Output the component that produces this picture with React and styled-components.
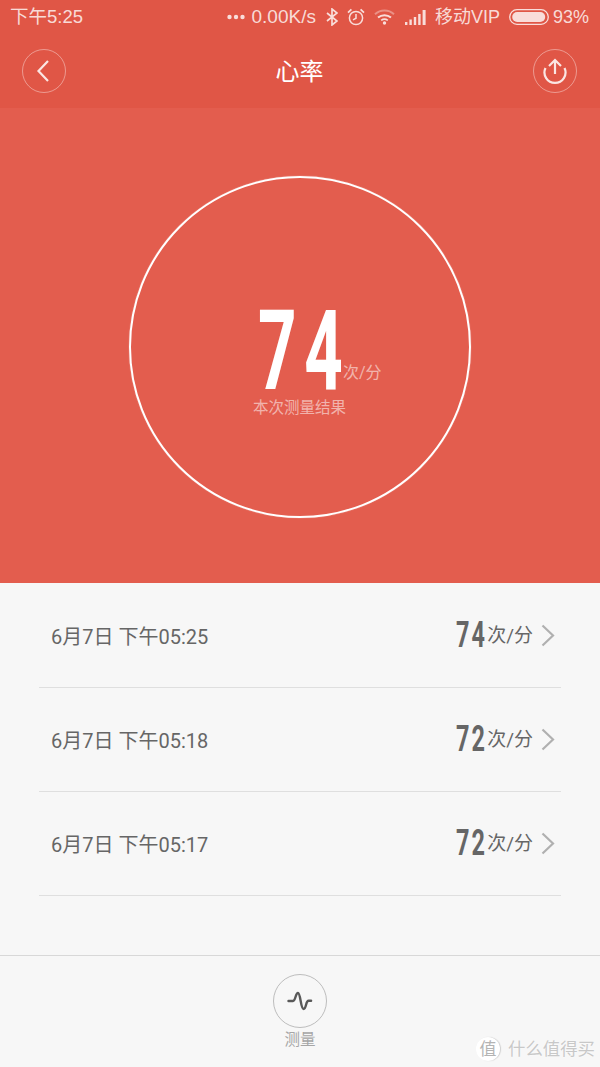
import React from 'react'
import styled, { createGlobalStyle } from 'styled-components'

const GlobalStyle = createGlobalStyle`
    html, body {
        margin: 0;
        padding: 0;
        background: #f7f7f7;
    }
    * {
        box-sizing: border-box;
    }
`

const CJK = '"Noto Sans CJK SC", sans-serif'

const Page = styled.div`
    position: relative;
    width: 600px;
    height: 1067px;
    overflow: hidden;
    display: flex;
    flex-direction: column;
    font-family: Roboto, ${CJK};
    background: #f7f7f7;
`

const Top = styled.div`
    height: 108px;
    background: #e05646;
    display: flex;
    flex-direction: column;
`

const StatusBar = styled.div`
    height: 36px;
    padding: 0 11px 2px 10px;
    display: flex;
    align-items: center;
    justify-content: space-between;
    color: rgba(255, 255, 255, 0.8);
    font-family: "Liberation Sans", ${CJK};
    font-size: 18px;
    line-height: 22px;
    white-space: nowrap;
`

const StatusTime = styled.span`
    font-size: 18.5px;
`

const StatusRight = styled.div`
    display: flex;
    align-items: center;
`

const StatusItem = styled.span`
    display: flex;
    align-items: center;
    margin-left: ${({ $gap }) => $gap}px;
    font-size: ${({ $size }) => $size || 18}px;
`

const NavBar = styled.div`
    flex: 1;
    padding: 0 23px 2px 22px;
    display: flex;
    align-items: center;
    justify-content: space-between;
`

const RoundButton = styled.div`
    width: 44px;
    height: 44px;
    border-radius: 50%;
    border: 1px solid rgba(255, 255, 255, 0.4);
    display: flex;
    align-items: center;
    justify-content: center;
`

const Title = styled.div`
    color: #fff;
    font-size: 24px;
    line-height: 30px;
    margin-top: 2px;
`

const Hero = styled.div`
    height: 475px;
    background: #e35d4e;
    padding-top: 68px;
    display: flex;
    justify-content: center;
`

const Ring = styled.div`
    width: 342px;
    height: 342px;
    border-radius: 50%;
    border: 2px solid #fff;
    box-shadow: 0 0 1px rgba(255, 255, 255, 0.8);
    padding: 127px 0 0 122px;
    display: flex;
    flex-direction: column;
    align-items: flex-start;
`

const ValueRow = styled.div`
    display: flex;
    align-items: flex-end;
    height: 91px;
`

const BigNumber = styled.div`
    width: 90px;
    height: 91px;
    margin-left: 5px;
    font-family: Roboto, sans-serif;
    font-weight: 700;
    font-size: 112px;
    line-height: 91px;
    letter-spacing: 13px;
    color: #fff;
    transform: scaleX(0.6);
    transform-origin: left center;
    white-space: nowrap;
`

const BigUnit = styled.span`
    color: rgba(255, 255, 255, 0.55);
    font-size: 16px;
    line-height: 20px;
    margin-bottom: 13px;
    margin-left: -5px;
`

const Caption = styled.div`
    color: rgba(255, 255, 255, 0.55);
    font-size: 15.5px;
    line-height: 22px;
    margin-top: 1px;
`

const List = styled.div`
    flex: 1;
    padding: 1px 39px 0;
`

const Row = styled.div`
    height: 104px;
    border-bottom: 1px solid #dfdfdf;
    padding: 0 6px 1px 12px;
    display: flex;
    align-items: center;
    justify-content: space-between;
    color: #666;
`

const RowDate = styled.span`
    font-size: 20px;
    white-space: nowrap;
`

const RowValue = styled.div`
    display: flex;
    align-items: center;
`

const RowNumber = styled.span`
    display: block;
    width: 31px;
    font-family: Roboto, sans-serif;
    font-weight: 700;
    font-size: 36px;
    line-height: 40px;
    letter-spacing: 3px;
    transform: scaleX(0.65);
    transform-origin: left center;
    white-space: nowrap;
`

const RowUnit = styled.span`
    font-size: 19px;
    line-height: 24px;
    white-space: nowrap;
    margin: 2px 8px 0 0;
`

const TabBar = styled.div`
    height: 112px;
    border-top: 1px solid #d8d8d8;
    padding-top: 18px;
    display: flex;
    flex-direction: column;
    align-items: center;
`

const MeasureButton = styled.div`
    width: 54px;
    height: 54px;
    border-radius: 50%;
    border: 1px solid #bdbdbd;
    display: flex;
    align-items: center;
    justify-content: center;
`

const TabLabel = styled.div`
    color: #a6a6a6;
    font-size: 15.5px;
    line-height: 20px;
    margin-top: 2px;
`

const Watermark = styled.div`
    position: absolute;
    right: 5px;
    bottom: 6px;
    display: flex;
    align-items: center;
    gap: 8px;
    color: #c8c8c8;
    font-size: 17.4px;
    line-height: 24px;
    text-shadow: 0 0 2px #fff;
`

const WatermarkBadge = styled.span`
    width: 24px;
    height: 24px;
    border-radius: 50%;
    background: #fff;
    box-shadow: 1px 0 1px #cfcfcf;
    display: flex;
    align-items: center;
    justify-content: center;
    font-size: 17px;
    color: #b4b4b4;
`

const rows = [
    { date: '6月7日 下午05:25', value: 74 },
    { date: '6月7日 下午05:18', value: 72 },
    { date: '6月7日 下午05:17', value: 72 },
]

const Dots = () => (
    <svg width="18" height="6" viewBox="0 0 18 6" fill="rgba(255,255,255,0.8)">
        <circle cx="2.5" cy="3" r="2.2" />
        <circle cx="9" cy="3" r="2.2" />
        <circle cx="15.5" cy="3" r="2.2" />
    </svg>
)

const Bluetooth = () => (
    <svg width="12" height="18" viewBox="0 0 12 18" fill="none" stroke="rgba(255,255,255,0.8)" strokeWidth="1.7">
        <path d="M1 5l10 8-5 4V1l5 4-10 8" />
    </svg>
)

const Alarm = () => (
    <svg width="18" height="18" viewBox="0 0 18 18" fill="none" stroke="rgba(255,255,255,0.8)" strokeWidth="1.5">
        <circle cx="9" cy="10" r="6.6" />
        <path d="M9 6v4.2l-3 1.6" />
        <path d="M1 4.6L4.4 1.4M17 4.6L13.6 1.4" strokeWidth="1.8" />
    </svg>
)

const Wifi = () => (
    <svg width="21" height="16" viewBox="0 0 21 16" fill="none">
        <path d="M1 5.2C6.4.4 14.6.4 20 5.2" stroke="rgba(255,255,255,0.35)" strokeWidth="2" />
        <path d="M4 8.6c3.8-3.2 9.2-3.2 13 0" stroke="rgba(255,255,255,0.8)" strokeWidth="2" />
        <path d="M7.2 11.4c2-1.5 4.6-1.5 6.6 0" stroke="rgba(255,255,255,0.8)" strokeWidth="1.8" />
        <circle cx="10.5" cy="14" r="1.7" fill="rgba(255,255,255,0.8)" />
    </svg>
)

const Signal = () => (
    <svg width="21" height="15" viewBox="0 0 21 15" fill="rgba(255,255,255,0.8)">
        <rect x="0" y="12" width="2.4" height="3" />
        <rect x="4.4" y="9.5" width="2.4" height="5.5" />
        <rect x="8.8" y="7" width="2.4" height="8" />
        <rect x="13.2" y="4" width="2.4" height="11" />
        <rect x="17.6" y="0" width="3" height="15" />
    </svg>
)

const Battery = () => (
    <svg width="40" height="16" viewBox="0 0 40 16">
        <rect x="0.7" y="0.7" width="38.6" height="14.6" rx="7.3" fill="none" stroke="rgba(255,255,255,0.8)" strokeWidth="1.3" />
        <rect x="3.2" y="3" width="33" height="10" rx="5" fill="rgba(255,255,255,0.8)" />
    </svg>
)

const BackIcon = () => (
    <svg width="16" height="22" viewBox="0 0 16 22" fill="none" stroke="rgba(255,255,255,0.85)" strokeWidth="2.2">
        <path d="M12 1L2.5 11 12 21" />
    </svg>
)

const ShareIcon = () => (
    <svg width="26" height="28" viewBox="0 0 26 28" fill="none" stroke="rgba(255,255,255,0.85)" strokeWidth="2.2">
        <path d="M13 17V3M7 9l6-6 6 6" />
        <path d="M3.5 11a10.5 10.5 0 1 0 19 0" />
    </svg>
)

const Chevron = () => (
    <svg width="14" height="23" viewBox="0 0 14 23" fill="none" stroke="#b0b0b0" strokeWidth="2.2">
        <path d="M1.5 1.5L12 11.5 1.5 21.5" />
    </svg>
)

const WaveIcon = () => (
    <svg width="26" height="20" viewBox="0 0 26 20" fill="none" stroke="#595959" strokeWidth="2.4" strokeLinecap="round">
        <path d="M1.5 10H6c2.6 0 2.4-8 5-8s2.6 16 5.6 16c2.8 0 2-8.2 5-8.2h2.5" />
    </svg>
)

const App = () => {
    return (
        <>
            <GlobalStyle />
            <Page>
                <Top>
                    <StatusBar>
                        <StatusTime>下午5:25</StatusTime>
                        <StatusRight>
                            <Dots />
                            <StatusItem $gap={7} $size={19}>0.00K/s</StatusItem>
                            <StatusItem $gap={10}><Bluetooth /></StatusItem>
                            <StatusItem $gap={9}><Alarm /></StatusItem>
                            <StatusItem $gap={9}><Wifi /></StatusItem>
                            <StatusItem $gap={10}><Signal /></StatusItem>
                            <StatusItem $gap={9}>移动VIP</StatusItem>
                            <StatusItem $gap={9}><Battery /></StatusItem>
                            <StatusItem $gap={4}>93%</StatusItem>
                        </StatusRight>
                    </StatusBar>
                    <NavBar>
                        <RoundButton><BackIcon /></RoundButton>
                        <Title>心率</Title>
                        <RoundButton><ShareIcon /></RoundButton>
                    </NavBar>
                </Top>
                <Hero>
                    <Ring>
                        <ValueRow>
                            <BigNumber>74</BigNumber>
                            <BigUnit>次/分</BigUnit>
                        </ValueRow>
                        <Caption>本次测量结果</Caption>
                    </Ring>
                </Hero>
                <List>
                    {rows.map((row) => (
                        <Row key={row.date}>
                            <RowDate>{row.date}</RowDate>
                            <RowValue>
                                <RowNumber>{row.value}</RowNumber>
                                <RowUnit>次/分</RowUnit>
                                <Chevron />
                            </RowValue>
                        </Row>
                    ))}
                </List>
                <TabBar>
                    <MeasureButton><WaveIcon /></MeasureButton>
                    <TabLabel>测量</TabLabel>
                </TabBar>
                <Watermark>
                    <WatermarkBadge>值</WatermarkBadge>
                    <span>什么值得买</span>
                </Watermark>
            </Page>
        </>
    )
}

export default App
